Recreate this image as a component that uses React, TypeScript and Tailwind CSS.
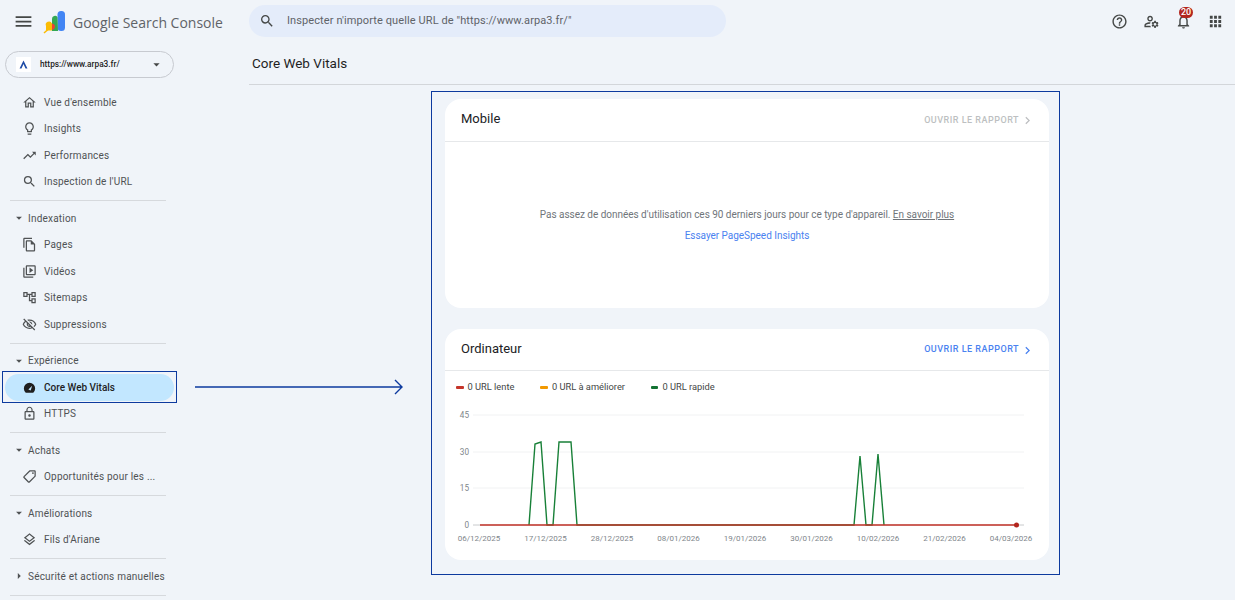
// Search Console — Core Web Vitals overview
import type { ReactNode } from 'react';
import {
  MdApps, MdArrowDropDown, MdArrowRight, MdChevronRight, MdHelpOutline, MdLightbulbOutline, MdLockOutline,
  MdMenu, MdNotificationsNone, MdOutlineAccountTree, MdOutlineFileCopy, MdOutlineHome, MdOutlineLayers,
  MdOutlineLocalOffer, MdOutlineManageAccounts, MdOutlineVideoLibrary, MdOutlineVisibilityOff, MdSearch, MdTrendingUp,
} from 'react-icons/md';

const FONT = 'font-["Roboto","Liberation_Sans",sans-serif]';

function NavItem({ icon, label, active }: { icon: ReactNode; label: string; active?: boolean }) {
  return (
    <div className={`flex h-[26.5px] items-center rounded-full ml-[5px] mr-[75px] pl-[17px] text-[10px] ${active ? 'bg-[#c2e7ff] font-medium tracking-[0px] text-[#1f1f1f]' : 'tracking-[0.2px] text-[#4f5254]'}`}>
      <span className="flex w-[22px] text-[15px] text-[#4f5254]">{icon}</span>
      {label}
    </div>
  );
}

function Section({ label, open = true }: { label: string; open?: boolean }) {
  return (
    <div className="flex h-[26.5px] items-center pl-[12px] text-[10px] tracking-[0.2px] text-[#4f5254]">
      <span className="flex w-[16px] text-[14px]">{open ? <MdArrowDropDown /> : <MdArrowRight />}</span>
      {label}
    </div>
  );
}

function Divider() {
  return <div className="mb-[4px] ml-[10px] mr-[83px] mt-[5px] h-px bg-[#d6d9dd]" />;
}

function CardHeader({ title, active }: { title: string; active?: boolean }) {
  return (
    <div className={`flex items-center justify-between border-b border-[#e6e8ea] pl-[16px] pr-[14px] ${active ? 'h-[42px]' : 'h-[43px]'}`}>
      <span className="pb-[2px] text-[13px] text-[#202124]">{title}</span>
      <span className={`flex items-center pt-[1px] text-[9px] font-medium tracking-[0.5px] ${active ? 'text-[#4a82f0]' : 'text-[#bdbfc1]'}`}>
        OUVRIR LE RAPPORT
        <MdChevronRight className="ml-[1px] text-[15px]" />
      </span>
    </div>
  );
}

function Legend({ color, label }: { color: string; label: string }) {
  return (
    <span className="flex items-center gap-[4px]">
      <span className={`h-[3px] w-[7.5px] rounded-[1px] ${color}`} />
      {label}
    </span>
  );
}

function Chart() {
  // coordonnées relatives à la carte
  const green = '84,130 90,49 96,47 102,130 108,130 114,47 126,47 132,130 409,130 415,61 421,130 427,130 433,59 439,130';
  const dates = ['06/12/2025', '17/12/2025', '28/12/2025', '08/01/2026', '19/01/2026', '30/01/2026', '10/02/2026', '21/02/2026', '04/03/2026'];
  const grid: [string, number][] = [['45', 20], ['30', 57], ['15', 93]];
  return (
    <svg width="604" height="160" className="block">
      {grid.map(([t, y]) => (
        <g key={t}>
          <line x1="28" x2="579" y1={y} y2={y} stroke="#f1f2f3" />
          <text x="24" y={y + 3} textAnchor="end" fontSize="8.2" fill="#80868b">{t}</text>
        </g>
      ))}
      <text x="24" y="133" textAnchor="end" fontSize="8.2" fill="#80868b">0</text>
      <line x1="28" x2="579" y1="130" y2="130" stroke="#c8cacc" />
      <polyline points={green} fill="none" stroke="#188038" strokeWidth="1.4" />
      <line x1="35" x2="571" y1="130" y2="130" stroke="#c5352a" strokeWidth="1.5" />
      <circle cx="571.5" cy="130" r="2.5" fill="#b3261e" />
      {dates.map((d, i) => (
        <text key={d} x={34 + i * 66.5} y="146" textAnchor="middle" fontSize="8" fill="#80868b">{d}</text>
      ))}
    </svg>
  );
}

export default function App() {
  return (
    <div className={`relative h-[600px] w-[1235px] overflow-hidden bg-[#f0f4f9] ${FONT}`}>
      <header className="flex h-[42px] items-center">
        <MdMenu className="ml-[13px] text-[21px] text-[#444746]" />
        <svg width="24" height="24" viewBox="0 0 24 24" className="ml-[8px] mt-[2px]">
          <rect x="15.5" y="1" width="7.5" height="20" rx="3.5" fill="#4285f4" />
          <path d="M15.5 7.2A3 3 0 0 0 10 9V21H16Z" fill="#34a853" />
          <path d="M10 13.5A3 3 0 0 0 4 16V20.5H10Z" fill="#fbbc04" />
          <path d="M10 13.5a3.5 3.5 0 0 1 3 3.5 3.5 3.5 0 0 1-3 3Z" fill="#ea4335" />
          <path d="M2 23l4-3.5" stroke="#fbbc04" strokeWidth="1.5" />
        </svg>
        <span className='ml-[7px] mt-[3px] w-[176px] font-["Open_Sans",sans-serif] text-[14px] text-[#5f6368]'>Google Search Console</span>
        <div className="flex h-[32px] w-[477px] items-center rounded-full bg-[#e4ecfa] pl-[10px] text-[11px] tracking-[0.1px] text-[#5f6368]">
          <MdSearch className="mr-[12px] text-[16px] text-[#444746]" />
          Inspecter n'importe quelle URL de "https://www.arpa3.fr/"
        </div>
        <div className="ml-auto mr-[11px] flex items-center gap-[15px] text-[17px] text-[#444746]">
          <MdHelpOutline />
          <MdOutlineManageAccounts />
          <span className="relative flex">
            <MdNotificationsNone />
            <span className="absolute -top-[6px] left-[4px] rounded-full bg-[#b3261e] px-[2px] text-[9px] font-medium leading-[11px] text-white">20</span>
          </span>
          <MdApps />
        </div>
      </header>

      <div className="flex">
        <aside className="w-[249px] shrink-0">
          <div className="ml-[5px] mt-[9px] flex h-[27px] w-[169px] items-center rounded-full border border-[#c7cad0] pl-[10px] pr-[9px] text-[8.3px] font-medium text-[#1f1f1f]">
            <span className="mr-[9px] flex h-[15px] w-[15px] items-center justify-center bg-white">
              <svg width="9" height="9" viewBox="0 0 8 8"><path d="M4 0.5L7.5 7.5H5.8L4 3.5L2.2 7.5H0.5Z" fill="#1c4aa6" /></svg>
            </span>
            https://www.arpa3.fr/
            <MdArrowDropDown className="ml-auto text-[15px] text-[#444746]" />
          </div>
          <div className="mt-[11px]">
            <NavItem icon={<MdOutlineHome />} label="Vue d'ensemble" />
            <NavItem icon={<MdLightbulbOutline />} label="Insights" />
            <NavItem icon={<MdTrendingUp />} label="Performances" />
            <NavItem icon={<MdSearch />} label="Inspection de l'URL" />
            <Divider />
            <Section label="Indexation" />
            <NavItem icon={<MdOutlineFileCopy />} label="Pages" />
            <NavItem icon={<MdOutlineVideoLibrary />} label="Vidéos" />
            <NavItem icon={<MdOutlineAccountTree />} label="Sitemaps" />
            <NavItem icon={<MdOutlineVisibilityOff />} label="Suppressions" />
            <Divider />
            <Section label="Expérience" />
            <NavItem
              icon={
                <svg width="15" height="15" viewBox="0 0 16 16">
                  <path d="M4 13.5A6 6 0 1 1 12 13.5Z" fill="#1f1f1f" />
                  <path d="M6.8 10.2L10.8 6.2L9.2 11.2Z" fill="#c2e7ff" />
                </svg>
              }
              label="Core Web Vitals"
              active
            />
            <NavItem icon={<MdLockOutline />} label="HTTPS" />
            <Divider />
            <Section label="Achats" />
            <NavItem icon={<MdOutlineLocalOffer className="-scale-x-100" />} label="Opportunités pour les ..." />
            <Divider />
            <Section label="Améliorations" />
            <NavItem icon={<MdOutlineLayers />} label="Fils d'Ariane" />
            <Divider />
            <Section label="Sécurité et actions manuelles" open={false} />
            <Divider />
          </div>
        </aside>

        <main className="flex-1">
          <h1 className="flex h-[43px] items-center border-b border-[#d3d6da] pl-[3px] text-[13.5px] font-normal text-[#1f1f1f]">Core Web Vitals</h1>
          <div className="ml-[196px] mr-[186px] mt-[14px]">
            <section className="h-[209px] overflow-hidden rounded-[16px] bg-white">
              <CardHeader title="Mobile" />
              <p className="mt-[65px] text-center text-[10px] tracking-[-0.03px] text-[#70757a]">
                Pas assez de données d'utilisation ces 90 derniers jours pour ce type d'appareil. <span className="underline">En savoir plus</span>
              </p>
              <p className="mt-[6px] text-center text-[10px] tracking-[-0.03px] text-[#4a82f0]">Essayer PageSpeed Insights</p>
            </section>
            <section className="mt-[21px] h-[231px] overflow-hidden rounded-[16px] bg-white">
              <CardHeader title="Ordinateur" active />
              <div className="mt-[8px] flex h-[16px] items-center gap-[26px] pl-[11px] text-[9.3px] text-[#444746]">
                <Legend color="bg-[#c5352a]" label="0 URL lente" />
                <Legend color="bg-[#f29900]" label="0 URL à améliorer" />
                <Legend color="bg-[#137333]" label="0 URL rapide" />
              </div>
              <Chart />
            </section>
          </div>
        </main>
      </div>

      {/* encadrés et flèche d'annotation */}
      <div className="pointer-events-none absolute left-[2px] top-[371px] h-[32px] w-[175px] border border-[#0d3a9e]" />
      <div className="pointer-events-none absolute left-[431px] top-[91px] h-[484px] w-[629px] border border-[#0d3a9e]" />
      <svg className="pointer-events-none absolute left-[195px] top-[379px]" width="208" height="16">
        <path d="M0 8H207M200 1l7 7-7 7" fill="none" stroke="#0d3a9e" strokeWidth="1.4" />
      </svg>
    </div>
  );
}
